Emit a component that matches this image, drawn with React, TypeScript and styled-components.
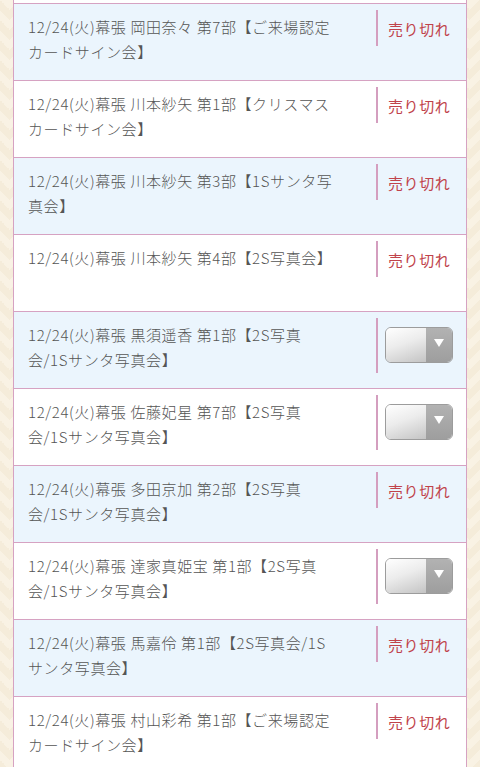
import React from "react"
import styled, { createGlobalStyle } from "styled-components"

const GlobalStyle = createGlobalStyle`
  html, body {
    margin: 0;
    padding: 0;
    height: 767px;
    overflow: hidden;
  }
  body {
    background-color: #f5ecda;
    background-image:
      linear-gradient(135deg, #f9f2e4 25%, transparent 25%),
      linear-gradient(225deg, #f9f2e4 25%, transparent 25%),
      linear-gradient(315deg, #f9f2e4 25%, transparent 25%),
      linear-gradient(45deg, #f9f2e4 25%, transparent 25%);
    background-position: -10px 0, -10px 0, 0 0, 0 0;
    background-size: 20px 20px;
    font-family: "Noto Sans CJK JP", "Noto Sans", sans-serif;
  }
`

const Page = styled.div`
  padding: 0 13px;
`

const Table = styled.div`
  border-left: 1px solid #d6a2c2;
  border-right: 1px solid #d6a2c2;
  padding-top: 3px;
  background: #ffffff;
`

const Row = styled.div<{ $alt: boolean }>`
  display: flex;
  height: 76px;
  border-top: 1px solid #d6a2c2;
  background: ${(p) => (p.$alt ? "#ebf5fd" : "#ffffff")};
`

const Name = styled.div`
  flex: 1;
  padding: 10px 0 0 14px;
  font-size: 15px;
  font-weight: 300;
  line-height: 25px;
  letter-spacing: 0.6px;
  color: #555555;
`

const Line = styled.span`
  display: block;
  white-space: nowrap;
`

const Status = styled.div`
  width: 90px;
  flex: none;
`

const StatusInner = styled.div<{ $select: boolean }>`
  margin-top: 6px;
  border-left: 2px solid #d49ebf;
  padding: ${(p) => (p.$select ? "9px 0 10px 7px" : "5.5px 0 5.5px 10px")};
  font-size: 15px;
  line-height: 25px;
  color: #c0434b;
  letter-spacing: 0.6px;
`

const SelectBox = styled.div`
  display: flex;
  width: 68px;
  height: 36px;
  box-sizing: border-box;
  border: 1px solid #9c9c9c;
  border-radius: 6px;
  overflow: hidden;
`

const SelectFace = styled.div`
  flex: 1;
  background: linear-gradient(160deg, #ffffff 0%, #ececec 45%, #c4c4c4 100%);
`

const SelectArrow = styled.div`
  width: 26px;
  display: flex;
  align-items: center;
  justify-content: center;
  background: linear-gradient(180deg, #b2b2b2 0%, #9e9e9e 100%);
  &::after {
    content: "";
    border-left: 5px solid transparent;
    border-right: 5px solid transparent;
    border-top: 8px solid #ffffff;
    margin-top: -4px;
  }
`

type Item = { lines: string[]; sold: boolean }

const items: Item[] = [
  { lines: ["12/24(火)幕張 岡田奈々 第7部【ご来場認定", "カードサイン会】"], sold: true },
  { lines: ["12/24(火)幕張 川本紗矢 第1部【クリスマス", "カードサイン会】"], sold: true },
  { lines: ["12/24(火)幕張 川本紗矢 第3部【1Sサンタ写", "真会】"], sold: true },
  { lines: ["12/24(火)幕張 川本紗矢 第4部【2S写真会】"], sold: true },
  { lines: ["12/24(火)幕張 黒須遥香 第1部【2S写真", "会/1Sサンタ写真会】"], sold: false },
  { lines: ["12/24(火)幕張 佐藤妃星 第7部【2S写真", "会/1Sサンタ写真会】"], sold: false },
  { lines: ["12/24(火)幕張 多田京加 第2部【2S写真", "会/1Sサンタ写真会】"], sold: true },
  { lines: ["12/24(火)幕張 達家真姫宝 第1部【2S写真", "会/1Sサンタ写真会】"], sold: false },
  { lines: ["12/24(火)幕張 馬嘉伶 第1部【2S写真会/1S", "サンタ写真会】"], sold: true },
  { lines: ["12/24(火)幕張 村山彩希 第1部【ご来場認定", "カードサイン会】"], sold: true },
]

export default function App() {
  return (
    <>
      <GlobalStyle />
      <Page>
        <Table>
          {items.map((item, i) => (
            <Row key={i} $alt={i % 2 === 0}>
              <Name>
                {item.lines.map((l, j) => (
                  <Line key={j}>{l}</Line>
                ))}
              </Name>
              <Status>
                <StatusInner $select={!item.sold}>
                  {item.sold ? (
                    "売り切れ"
                  ) : (
                    <SelectBox>
                      <SelectFace />
                      <SelectArrow />
                    </SelectBox>
                  )}
                </StatusInner>
              </Status>
            </Row>
          ))}
        </Table>
      </Page>
    </>
  )
}
